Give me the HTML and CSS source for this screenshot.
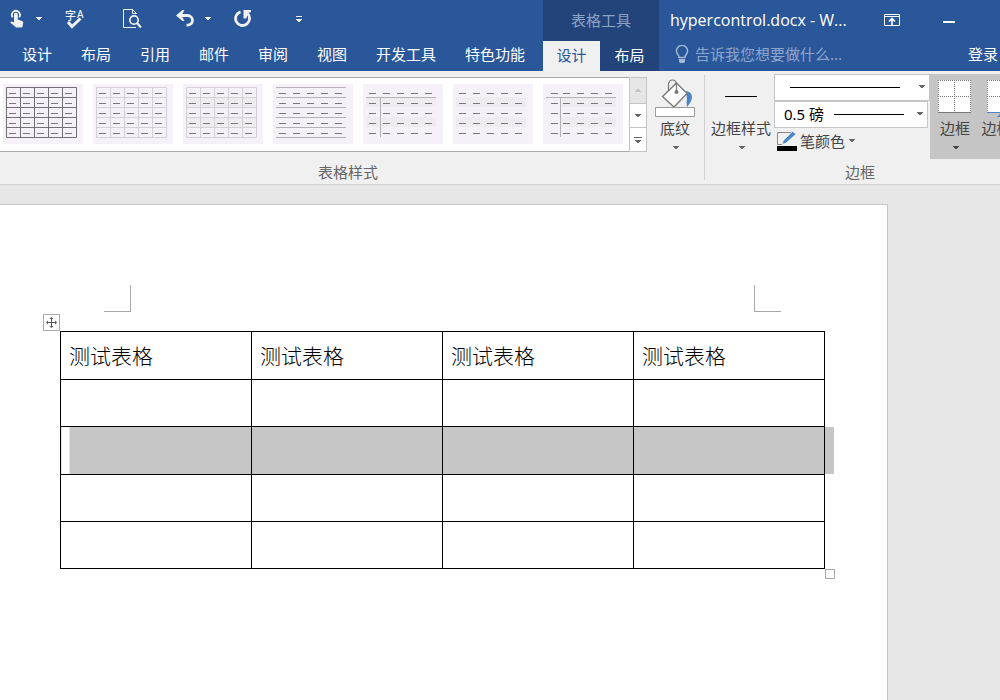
FILE: index.html
```html
<!DOCTYPE html>
<html lang="zh-CN">
<head>
<meta charset="utf-8">
<title>hypercontrol.docx - Word</title>
<link rel="stylesheet" href="styles.css">
</head>
<body>
<svg class="defs" aria-hidden="true">
  <defs>
    <symbol id="caret" viewBox="0 0 8 4"><path d="M1 0h6v1H6v1H5v1H3V2H2V1H1z" fill="currentColor"/></symbol>
    <symbol id="dashes" viewBox="0 0 80 60"><path d="M6 9.5h64M6 19.5h64M6 29.5h64M6 39.5h64M6 49.5h64" fill="none" stroke="#7a767b" stroke-dasharray="7 7"/></symbol>
    <symbol id="dashes-indent" viewBox="0 0 80 60"><path d="M20 9.5h50M20 19.5h50M20 29.5h50M20 39.5h50M20 49.5h50" fill="none" stroke="#7a767b" stroke-dasharray="7 7"/><path d="M8 9.5h7M8 19.5h7M8 29.5h7M8 39.5h7M8 49.5h7" stroke="#7a767b"/></symbol>
    <symbol id="mesh" viewBox="0 0 80 60"><path d="M3.5 3.5h70v50h-70zM3 13.5h71M3 23.5h71M3 33.5h71M3 43.5h71M17.5 3v51M31.5 3v51M45.5 3v51M59.5 3v51" fill="none" stroke="currentColor"/></symbol>
    <symbol id="bands" viewBox="0 0 80 60"><path d="M3 13h70v10H3zM3 33h70v10H3z" fill="#efebf0"/></symbol>
  </defs>
</svg>

<header class="header">
  <div class="main-head">
    <div class="quick-access">
      <button class="qa split" aria-label="触摸/鼠标模式">
        <svg width="16" height="20" viewBox="0 0 16 20"><path d="M3.600 8.200A4 4 0 1 1 10.200 8.200" fill="none" stroke="#f0f0f0" stroke-width="1.800"/><path d="M5 5.500q0-1.700 1.900-1.700t1.900 1.700V10.500l4.400 1.500q1.200.4 1 1.800l-.6 3.400q-.2 1.300-1.500 1.300H7.500Q6.600 18.500 6 17.500L1.200 13.500q.8-1.500 2.400-.8l1.400.8z" fill="#f0f0f0"/></svg>
        <svg class="caret" width="8" height="4"><use href="#caret"/></svg>
      </button>
      <button class="qa spelling" aria-label="拼写检查">
        <svg width="22" height="24" viewBox="0 0 22 24"><text x="0" y="13" class="glyph-zi">字</text><text x="12" y="11" class="glyph-a">A</text><path d="M3 15l4 4.500L15.500 11.500" fill="none" stroke="#f0f0f0" stroke-width="3"/></svg>
      </button>
      <button class="qa preview" aria-label="打印预览">
        <svg width="20" height="20" viewBox="0 0 20 20" fill="none" stroke="#f0f0f0"><path d="M14 18.500H1.500V.5h9L14.500 4.500V5M10.500.5v4h4"/><circle cx="12" cy="11" r="4.200" stroke-width="1.700"/><path d="M15 14l4 4.500" stroke-width="2.200"/></svg>
      </button>
      <button class="qa split undo" aria-label="撤销">
        <svg width="20" height="18" viewBox="0 0 20 18"><path d="M3 5.500h8.500a5 4.800 0 0 1 0 9.600h-1" fill="none" stroke="#f0f0f0" stroke-width="2.800"/><path d="M0 5.500l6.500-5.500h2L5.500 5.500l3 5.500h-2z" fill="#f0f0f0"/></svg>
        <svg class="caret" width="8" height="4"><use href="#caret"/></svg>
      </button>
      <button class="qa redo" aria-label="重复">
        <svg width="18" height="18" viewBox="0 0 18 18"><path d="M6.500 1.800A7 7 0 1 0 13.500 3.500" fill="none" stroke="#f0f0f0" stroke-width="2.800"/><path d="M9.500 0H17v2l-3 1-1.700 5.500H9.500z" fill="#f0f0f0"/></svg>
      </button>
      <button class="qa customize" aria-label="自定义快速访问工具栏">
        <svg width="8" height="6" viewBox="0 0 8 6"><path d="M1 0h6v1H1zM1 3h6v1H6v1H5v1H3V5H2V4H1z" fill="#f0f0f0"/></svg>
      </button>
    </div>
    <nav class="tabs">
      <button class="tab">设计</button><button class="tab">布局</button><button class="tab">引用</button><button class="tab">邮件</button><button class="tab">审阅</button><button class="tab">视图</button><button class="tab">开发工具</button><button class="tab">特色功能</button>
    </nav>
  </div>
  <div class="context-head">
    <div class="context-title">表格工具</div>
    <nav class="context-tabs">
      <button class="tab active">设计</button><button class="tab">布局</button>
    </nav>
  </div>
  <div class="side-head">
    <div class="title-row">
      <span class="doc-title">hypercontrol.docx - W...</span>
      <button class="window-button" aria-label="功能区显示选项">
        <svg width="16" height="12" viewBox="0 0 16 12"><path d="M.5.5h15v11H.5zM0 2.500h16" fill="none" stroke="#fff"/><path d="M8 11V5M5 7.500l3-3 3 3" fill="none" stroke="#fff" stroke-width="1.600"/></svg>
      </button>
      <button class="window-button minimize" aria-label="最小化">
        <svg width="12" height="2" viewBox="0 0 12 2"><path d="M0 0h12v2H0z" fill="#fff"/></svg>
      </button>
    </div>
    <div class="tell-row">
      <label class="tell">
        <svg width="14" height="18" viewBox="0 0 14 18"><path d="M4 12.500Q4 10.500 2.500 9A5.500 5.500 0 1 1 11.500 9Q10 10.500 10 12.500z" fill="none" stroke="#a5b8d6" stroke-width="1.500"/><path d="M4 14h6v2.500L9 18H5l-1-1.500z" fill="#a5b8d6"/></svg>
        <input type="text" placeholder="告诉我您想要做什么..." aria-label="告诉我您想要做什么">
      </label>
      <button class="sign-in">登录</button>
    </div>
  </div>
</header>

<section class="ribbon">
  <div class="group styles-group">
    <div class="group-body">
      <div class="gallery">
        <button class="thumb dark" aria-label="网格型"><svg width="80" height="60"><use href="#mesh"/><use href="#dashes"/></svg></button>
        <button class="thumb" aria-label="网格型浅色"><svg width="80" height="60"><use href="#mesh"/><use href="#dashes"/></svg></button>
        <button class="thumb" aria-label="普通表格 1"><svg width="80" height="60"><use href="#bands"/><use href="#mesh"/><use href="#dashes"/></svg></button>
        <button class="thumb" aria-label="普通表格 2"><svg width="80" height="60"><path d="M3 3.500h70M3 13.500h70M3 23.500h70M3 33.500h70M3 43.500h70M3 53.500h70" stroke="#b5b1b6"/><use href="#dashes"/></svg></button>
        <button class="thumb" aria-label="普通表格 3"><svg width="80" height="60"><use href="#bands"/><path d="M3 13.500h70M17.500 13v40" stroke="#b5b1b6"/><use href="#dashes"/></svg></button>
        <button class="thumb" aria-label="普通表格 4"><svg width="80" height="60"><use href="#bands"/><use href="#dashes"/></svg></button>
        <button class="thumb" aria-label="普通表格 5"><svg width="80" height="60"><path d="M18 13h55v10H18zM18 33h55v10H18z" fill="#efebf0"/><path d="M3 13.500h70M17.500 13v40" stroke="#b5b1b6"/><use href="#dashes-indent"/></svg></button>
      </div>
      <div class="scroller">
        <button class="up" disabled aria-label="上一行"><svg width="6" height="3" viewBox="0 0 6 3"><path d="M2 0h2v1h1v1h1v1H0V2h1V1h1z" fill="#c4c4c4"/></svg></button>
        <button aria-label="下一行"><svg width="8" height="4"><use href="#caret"/></svg></button>
        <button aria-label="其他"><svg width="8" height="6" viewBox="0 0 8 6"><path d="M0 0h8v1H0zM1 3h6v1H6v1H5v1H3V5H2V4H1z" fill="#666"/></svg></button>
      </div>
      <button class="large shading">
        <svg width="40" height="38" viewBox="0 0 40 38"><path d="M31 12q6 1 6 6 0 4-5 10-1-4 0-8z" fill="#4a86c5"/><path d="M21.500 4L32 14.500 19 28 7.500 17.500z" fill="#fff" stroke="#777" stroke-width="1.300"/><path d="M13.500 12V6q0-5 4-5t4 5v6" fill="none" stroke="#777" stroke-width="1.200"/><circle cx="21.500" cy="13" r="2" fill="#777"/><path d="M.5 28.500h39v9H.5z" fill="#fff" stroke="#999"/></svg>
        <span>底纹</span>
        <svg class="caret" width="8" height="4"><use href="#caret"/></svg>
      </button>
    </div>
    <div class="group-label">表格样式</div>
  </div>
  <div class="group borders-group">
    <div class="group-body">
      <button class="large border-style">
        <svg width="32" height="38" viewBox="0 0 32 38"><path d="M0 17.500h32" stroke="#000"/></svg>
        <span>边框样式</span>
        <svg class="caret" width="8" height="4"><use href="#caret"/></svg>
      </button>
      <div class="pen">
        <div class="combo"><select class="line-style" aria-label="笔样式"><option></option></select><svg class="caret" width="8" height="4"><use href="#caret"/></svg></div>
        <div class="combo weight"><select class="line-weight" aria-label="笔划粗细"><option>0.5 磅</option></select><svg class="caret" width="8" height="4"><use href="#caret"/></svg></div>
        <button class="pen-color">
          <svg width="20" height="20" viewBox="0 0 20 20"><path d="M14 1.500H.5v12H5" fill="none" stroke="#888"/><path d="M5 13.500l1.500-4L15.500.5 19 3 9 12z" fill="#4a86c5" stroke="#f0f0f0" stroke-width=".6"/><path d="M0 15h20v5H0z"/></svg>
          <span>笔颜色</span>
          <svg class="caret" width="8" height="4"><use href="#caret"/></svg>
        </button>
      </div>
      <button class="large toggled">
        <svg width="34" height="38" viewBox="0 0 34 38"><path d="M0 0h33v33H0z" fill="#fff"/><path d="M0 .5h33M0 16.500h33M.5 0v32M16.500 0v32M32.500 0v32" stroke="#777" stroke-dasharray="1 1"/><path d="M0 32.500h33" stroke="#777"/></svg>
        <span>边框</span>
        <svg class="caret" width="8" height="4"><use href="#caret"/></svg>
      </button>
      <button class="large toggled painter">
        <svg width="34" height="38" viewBox="0 0 34 38"><path d="M0 0h33v33H0z" fill="#fff"/><path d="M0 .5h33M0 16.500h33M.5 0v32M16.500 0v32" stroke="#777" stroke-dasharray="1 1"/><path d="M0 32.500h33" stroke="#4a86c5"/><path d="M10 37l3-3h6v3z" fill="#4a86c5"/></svg>
        <span>边框刷</span>
      </button>
    </div>
    <div class="group-label">边框</div>
  </div>
</section>

<main class="workspace">
  <article class="page">
    <div class="margin-marks"><span class="mark left"></span><span class="mark right"></span></div>
    <div class="table-wrap">
      <button class="move-handle" aria-label="移动表格"><svg width="11" height="11" viewBox="0 0 11 11"><path d="M5.500 1v9M1 5.500h9" stroke="#555"/><path d="M5.500 0l2 2h-4zM5.500 11l2-2h-4zM0 5.500l2-2v4zM11 5.500l-2-2v4z" fill="#555"/></svg></button>
      <table class="doc-table">
        <tr><td>测试表格</td><td>测试表格</td><td>测试表格</td><td>测试表格</td></tr>
        <tr><td></td><td></td><td></td><td></td></tr>
        <tr class="selected"><td></td><td></td><td></td><td></td></tr>
        <tr><td></td><td></td><td></td><td></td></tr>
        <tr><td></td><td></td><td></td><td></td></tr>
      </table>
      <span class="resize-handle"></span>
    </div>
  </article>
</main>
</body>
</html>
```
FILE: styles.css
```css
* { box-sizing: border-box; }

body {
  margin: 0;
  min-height: 100vh;
  display: flex;
  flex-direction: column;
  overflow: hidden;
  background: #e6e6e6;
  color: #444;
  font: 15px/20px "Noto Sans", "Noto Sans CJK SC", sans-serif;
}

button, input, select {
  margin: 0;
  padding: 0;
  border: 0;
  background: none;
  color: inherit;
  font: inherit;
  white-space: nowrap;
}

svg { display: block; flex: none; }
.defs { position: absolute; width: 0; height: 0; }

/* Title bar and tabs */
.header { display: flex; background: #2a579a; color: #fff; }
.main-head { flex: none; width: 543px; }

.quick-access { display: flex; align-items: center; height: 38px; padding-left: 9px; color: #f0f0f0; }
.qa { display: flex; align-items: center; }
.split { gap: 10px; }
.spelling { margin-left: 22px; }
.preview { margin-left: 35px; }
.undo { margin-left: 34px; gap: 8px; }
.redo { margin-left: 22px; }
.customize { margin-left: 43px; }
.glyph-zi { font-size: 11px; font-weight: 500; fill: #f0f0f0; }
.glyph-a { font-size: 10px; font-weight: 500; fill: #f0f0f0; }

.tabs { display: flex; gap: 29px; height: 33px; padding-left: 22px; }
.tab { padding-bottom: 2px; }
.context-head { flex: none; width: 116px; background: #22447a; }
.context-title { height: 41px; line-height: 41px; text-align: center; color: #8fa3c4; }
.context-tabs { display: flex; height: 30px; }
.context-tabs .tab { flex: 1; }
.context-tabs .active { flex: none; width: 57px; background: #f0f0f0; color: #2a579a; }

.side-head { flex: 1; min-width: 0; }
.title-row { display: flex; align-items: center; height: 39px; padding: 0 45px 0 11px; }
.doc-title { flex: 1; font: 16px/20px "Open Sans", sans-serif; white-space: nowrap; }
.window-button { display: flex; }
.minimize { margin: 4px 0 0 43px; }
.tell-row { display: flex; align-items: center; height: 32px; padding: 0 2px 2px 16px; }
.tell { flex: 1; min-width: 0; display: flex; align-items: center; gap: 6px; }
.tell input { flex: 1; min-width: 0; height: 24px; }
.tell input::placeholder { color: #8fa6cc; opacity: 1; }

/* Ribbon */
.ribbon { display: flex; height: 114px; background: #f0f0f0; border-bottom: 1px solid #d4d4d4; }
.group { display: flex; flex-direction: column; }
.group-body { display: flex; height: 91px; }
.group-label { text-align: center; color: #666; }
.styles-group { flex: none; width: 705px; position: relative; }
.styles-group::after { content: ""; position: absolute; right: 0; top: 4px; bottom: 4px; width: 1px; background: #d0d0d0; }
.styles-group .group-label { padding-right: 9px; }
.borders-group { flex: 1; min-width: 0; overflow: hidden; }
.borders-group .group-label { padding-left: 15px; }

.gallery {
  display: flex;
  gap: 10px;
  width: 629px;
  height: 75px;
  margin-top: 6px;
  padding: 6px 3px;
  background: #fff;
  border: solid #ababab;
  border-width: 1px 0;
}
.thumb { flex: none; width: 80px; height: 60px; background: #f6f1f8; color: #d4d0d5; }
.thumb.dark { color: #727075; }

.scroller { display: flex; flex-direction: column; width: 18px; height: 75px; margin-top: 6px; border: 1px solid #c4c4c4; }
.scroller button { flex: 1; display: flex; align-items: center; justify-content: center; background: #fff; color: #666; }
.scroller button + button { border-top: 1px solid #c4c4c4; }
.scroller .up { flex: none; height: 25px; background: #e6e6e6; }

.large { display: flex; flex-direction: column; align-items: center; flex: none; padding-top: 8px; }
.large > svg:first-child { height: 38px; }
.large span { margin-top: 1px; }
.large .caret { margin: 8px 0 0 2px; color: #666; }
.shading { width: 56px; }
.border-style { width: 69px; padding-left: 3px; }

.pen { display: flex; flex-direction: column; flex: none; width: 156px; padding-top: 3px; }
.combo { position: relative; height: 27px; }
.combo.weight { margin-right: 2px; }
.combo select {
  display: block;
  width: 100%;
  height: 27px;
  padding-left: 9px;
  border: 1px solid #c6c6c6;
  appearance: none;
  background: #fff linear-gradient(#000, #000) no-repeat;
  color: #000;
}
.combo .line-style { background-size: 110px 1px; background-position: 15px 12px; }
.combo .line-weight { padding-bottom: 2px; background-size: 70px 1px; background-position: 59px 12px; }
.combo .caret { position: absolute; right: 4px; top: 11px; color: #666; pointer-events: none; }
.pen-color { display: flex; align-items: center; gap: 3px; height: 25px; padding-left: 3px; }
.pen-color .caret { color: #666; }

.toggled { width: 50px; height: 85px; margin-top: 3px; padding-top: 6px; background: #c5c5c5; }
.toggled span { margin-top: 0; }
.toggled .caret { color: #444; }
.painter { width: 48px; }

/* Document */
.workspace { flex: 1; display: flex; padding: 19px 112px 0 0; }
.page { flex: 1; padding: 80px 62px 0 60px; background: #fff; border: solid #c6c6c6; border-width: 1px 1px 0 0; }
.margin-marks { display: flex; justify-content: space-between; padding: 0 44px; }
.mark { width: 27px; height: 27px; border-bottom: 1px solid #aaa; }
.mark.left { border-right: 1px solid #aaa; }
.mark.right { border-left: 1px solid #aaa; }

.table-wrap { position: relative; margin-top: 19px; }
.doc-table { width: 100%; border-collapse: collapse; table-layout: fixed; color: #000; font-size: 21px; font-weight: 300; line-height: 28px; }
.doc-table tr { height: 47px; }
.doc-table tr:nth-child(odd) { height: 48px; }
.doc-table tr:last-child { height: 47px; }
.doc-table td { padding: 0 8px; border: 1px solid #000; }
.selected td { background: #c6c6c6; }
.selected td:first-child { background: linear-gradient(90deg, #fff 8px, #c6c6c6 8px); }
.selected td:last-child { position: relative; }
.selected td:last-child::after { content: ""; position: absolute; left: 100%; top: 0; bottom: 0; width: 10px; background: linear-gradient(90deg, #000 1px, #c6c6c6 1px); }
.move-handle { position: absolute; right: 100%; bottom: 100%; display: flex; align-items: center; justify-content: center; width: 17px; height: 17px; border: 1px solid #aaa; background: #fff; }
.resize-handle { position: absolute; left: 100%; top: 100%; width: 10px; height: 10px; border: 1px solid #aaa; background: #fff; }
```
